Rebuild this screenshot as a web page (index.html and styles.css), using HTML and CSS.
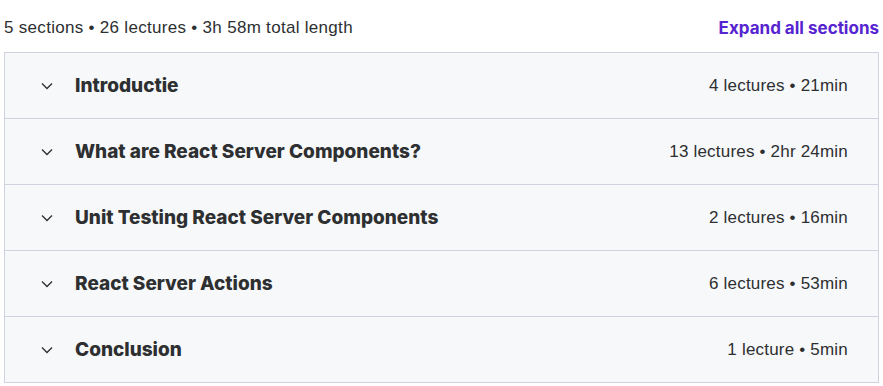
FILE: index.html
```html
<!DOCTYPE html>
<html>
<head>
<meta charset="utf-8">
<link rel="stylesheet" href="styles.css">
</head>
<body>
<div class="curriculum">
  <div class="summary">
    <span class="summary-text">5 sections • 26 lectures • 3h 58m total length</span>
    <span class="expand">Expand all sections</span>
  </div>
  <div class="sections">
    <div class="section">
      <svg class="chev" viewBox="0 0 12 8" width="12" height="8"><path d="M1 1.5 L6 6.5 L11 1.5" fill="none" stroke="#2d2f31" stroke-width="1.3"/></svg>
      <span class="title">Introductie</span>
      <span class="meta">4 lectures • 21min</span>
    </div>
    <div class="section">
      <svg class="chev" viewBox="0 0 12 8" width="12" height="8"><path d="M1 1.5 L6 6.5 L11 1.5" fill="none" stroke="#2d2f31" stroke-width="1.3"/></svg>
      <span class="title">What are React Server Components?</span>
      <span class="meta">13 lectures • 2hr 24min</span>
    </div>
    <div class="section">
      <svg class="chev" viewBox="0 0 12 8" width="12" height="8"><path d="M1 1.5 L6 6.5 L11 1.5" fill="none" stroke="#2d2f31" stroke-width="1.3"/></svg>
      <span class="title">Unit Testing React Server Components</span>
      <span class="meta">2 lectures • 16min</span>
    </div>
    <div class="section">
      <svg class="chev" viewBox="0 0 12 8" width="12" height="8"><path d="M1 1.5 L6 6.5 L11 1.5" fill="none" stroke="#2d2f31" stroke-width="1.3"/></svg>
      <span class="title">React Server Actions</span>
      <span class="meta">6 lectures • 53min</span>
    </div>
    <div class="section">
      <svg class="chev" viewBox="0 0 12 8" width="12" height="8"><path d="M1 1.5 L6 6.5 L11 1.5" fill="none" stroke="#2d2f31" stroke-width="1.3"/></svg>
      <span class="title">Conclusion</span>
      <span class="meta">1 lecture • 5min</span>
    </div>
  </div>
</div>
</body>
</html>
```

FILE: styles.css
```css
html, body {
  margin: 0;
  padding: 0;
  background: #ffffff;
}
body {
  font-family: "Liberation Sans", Arial, sans-serif;
  color: #2d2f31;
}
.curriculum {
  margin-left: 4px;
  width: 875px;
}
.summary {
  height: 52px;
  display: flex;
  align-items: center;
  justify-content: space-between;
  padding-top: 3px;
  box-sizing: border-box;
}
.summary-text {
  font-size: 17px;
  letter-spacing: 0.3px;
  color: #2d2f31;
}
.expand {
  font-family: Inter, "Liberation Sans", sans-serif;
  font-weight: 700;
  font-size: 17px;
  color: #5624d0;
}
.sections {
  border: 1px solid #d1d2e0;
  border-bottom: none;
}
.section {
  height: 65px;
  border-bottom: 1px solid #d1d2e0;
  background: #f7f8fa;
  display: flex;
  align-items: center;
  padding: 0 30px 0 36px;
}
.chev {
  flex: none;
  margin-right: 22px;
}
.title {
  font-family: Inter, "Liberation Sans", sans-serif;
  font-weight: 800;
  font-size: 19px;
  color: #2d2f31;
  flex: 1;
}
.meta {
  font-size: 17px;
  letter-spacing: 0.2px;
  color: #2d2f31;
}
```
